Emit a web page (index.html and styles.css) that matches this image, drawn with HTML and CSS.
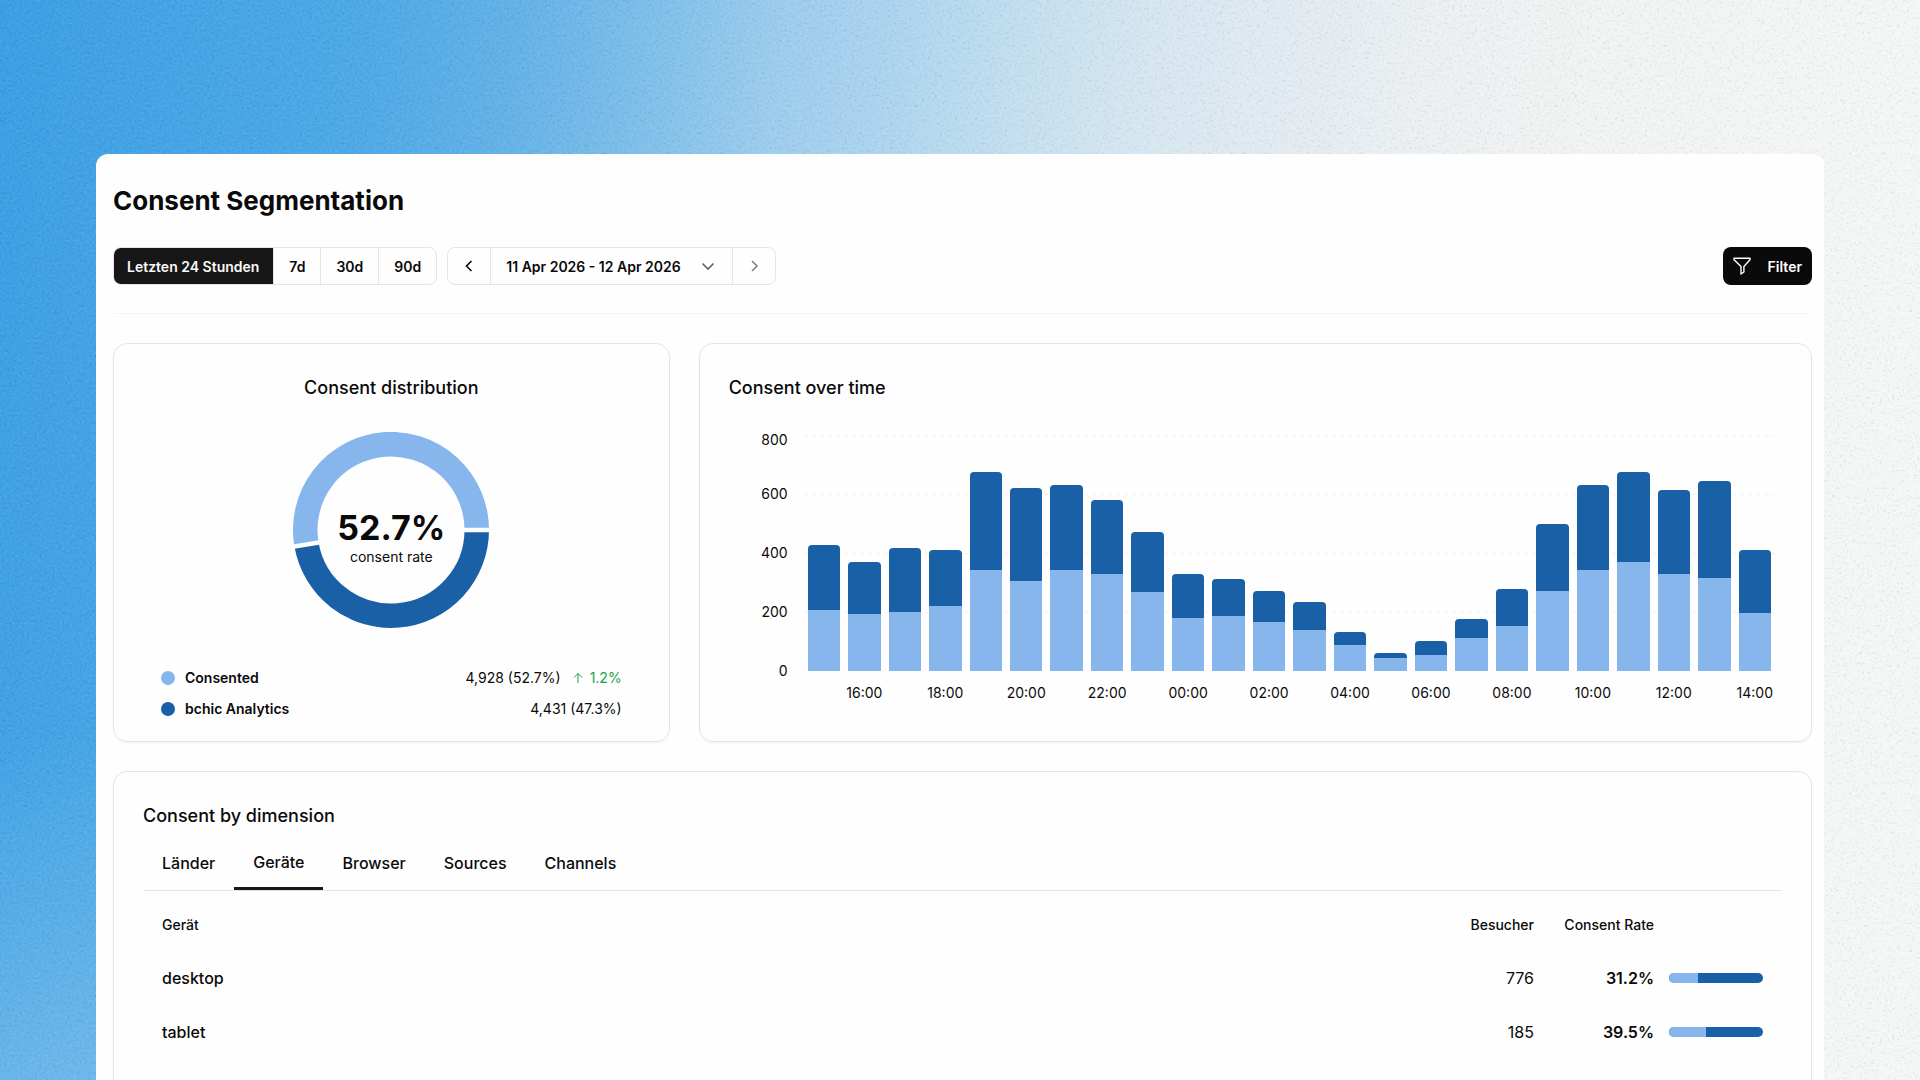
FILE: index.html
```html
<!DOCTYPE html>
<html lang="de">
<head>
<meta charset="utf-8">
<title>Consent Segmentation</title>
<link rel="stylesheet" href="styles.css">
</head>
<body>
<div class="stage">
  <svg class="grain" aria-hidden="true">
    <filter id="grain" x="0" y="0" width="100%" height="100%" color-interpolation-filters="sRGB">
      <feTurbulence type="fractalNoise" baseFrequency="0.4" numOctaves="3" seed="4"/>
      <feColorMatrix values="0.8 0.8 0.8 0 -0.7  0.8 0.8 0.8 0 -0.7  0.8 0.8 0.8 0 -0.7  0 0 0 0 1"/>
    </filter>
    <rect width="100%" height="100%" filter="url(#grain)"/>
  </svg>
  <main class="panel">
    <h1 class="page-title">Consent Segmentation</h1>
    <div class="toolbar">
      <div class="segmented" role="group" aria-label="Zeitraum">
        <button class="segment segment-active" type="button" aria-pressed="true">Letzten 24 Stunden</button>
        <button class="segment" type="button">7d</button>
        <button class="segment" type="button">30d</button>
        <button class="segment" type="button">90d</button>
      </div>
      <div class="segmented" role="group" aria-label="Datum">
        <button class="segment segment-icon" type="button" aria-label="Zurück"><svg class="chevron" viewBox="0 0 18 18"><path d="M11.500 4 L6.500 9 L11.500 14"/></svg></button>
        <button class="segment segment-date" type="button">11 Apr 2026 - 12 Apr 2026 <svg class="chevron chevron-muted" viewBox="0 0 18 18"><path d="M3.500 6.500 L9 12 L14.500 6.500"/></svg></button>
        <button class="segment segment-icon segment-disabled" type="button" disabled aria-label="Weiter"><svg class="chevron" viewBox="0 0 18 18"><path d="M7 4 L12 9 L7 14"/></svg></button>
      </div>
      <button class="filter-button" type="button"><svg class="funnel" viewBox="0 0 18 18"><path d="M1 1.300 H17 V2.800 L10.900 9.500 V15 L8 17 V9.500 L1 2.800 Z"/></svg>Filter</button>
    </div>

    <div class="cards">
      <section class="card distribution">
        <h2 class="card-title">Consent distribution</h2>
        <div class="donut">
          <svg class="donut-ring" viewBox="-98 -98 196 196" aria-hidden="true">
            <path class="ring-analytics" d="M85.750 0 A85.750 85.750 0 0 1 -84.500 14.500"/>
            <path class="ring-consented" d="M85.750 0 A85.750 85.750 0 1 0 -84.500 14.500"/>
            <path class="ring-gap" d="M72 0 H100 M-70.900 12.200 L-98.500 16.900"/>
          </svg>
          <p class="donut-label"><strong class="donut-value">52.7%</strong>consent rate</p>
        </div>
        <dl class="legend">
          <dt class="legend-name"><span class="dot dot-consented"></span>Consented</dt>
          <dd class="legend-value">4,928 (52.7%)<span class="trend"><svg class="trend-arrow" viewBox="0 0 12 12"><path d="M6 11 V1.500 M2 5.500 L6 1.500 L10 5.500"/></svg>1.2%</span></dd>
          <dt class="legend-name"><span class="dot dot-analytics"></span>bchic Analytics</dt>
          <dd class="legend-value">4,431 (47.3%)</dd>
        </dl>
      </section>

      <section class="card">
        <h2 class="card-title">Consent over time</h2>
        <div class="chart">
          <div class="y-axis"><span>800</span><span>600</span><span>400</span><span>200</span><span>0</span></div>
          <div class="plot">
            <svg class="gridlines" aria-hidden="true"><line x1="0" x2="100%" y1="0.500" y2="0.500"/><line x1="0" x2="100%" y1="59.500" y2="59.500"/><line x1="0" x2="100%" y1="118.500" y2="118.500"/><line x1="0" x2="100%" y1="177.500" y2="177.500"/></svg>
            <div class="bars">
              <div class="bar" style="--total:426;--consent:207"></div>
              <div class="bar" style="--total:369;--consent:194"></div>
              <div class="bar" style="--total:416;--consent:199"></div>
              <div class="bar" style="--total:411;--consent:220"></div>
              <div class="bar" style="--total:673;--consent:341"></div>
              <div class="bar" style="--total:621;--consent:306"></div>
              <div class="bar" style="--total:632;--consent:344"></div>
              <div class="bar" style="--total:579;--consent:327"></div>
              <div class="bar" style="--total:470;--consent:267"></div>
              <div class="bar" style="--total:328;--consent:180"></div>
              <div class="bar" style="--total:311;--consent:186"></div>
              <div class="bar" style="--total:270;--consent:165"></div>
              <div class="bar" style="--total:235;--consent:141"></div>
              <div class="bar" style="--total:132;--consent:87"></div>
              <div class="bar" style="--total:62;--consent:46"></div>
              <div class="bar" style="--total:101;--consent:54"></div>
              <div class="bar" style="--total:175;--consent:112"></div>
              <div class="bar" style="--total:279;--consent:153"></div>
              <div class="bar" style="--total:497;--consent:271"></div>
              <div class="bar" style="--total:632;--consent:344"></div>
              <div class="bar" style="--total:673;--consent:367"></div>
              <div class="bar" style="--total:615;--consent:331"></div>
              <div class="bar" style="--total:643;--consent:315"></div>
              <div class="bar" style="--total:410;--consent:197"></div>
            </div>
          </div>
          <div class="x-axis"><span></span><span>16:00</span><span></span><span>18:00</span><span></span><span>20:00</span><span></span><span>22:00</span><span></span><span>00:00</span><span></span><span>02:00</span><span></span><span>04:00</span><span></span><span>06:00</span><span></span><span>08:00</span><span></span><span>10:00</span><span></span><span>12:00</span><span></span><span>14:00</span></div>
        </div>
      </section>

      <section class="card card-wide">
        <h2 class="card-title">Consent by dimension</h2>
        <div class="tabs" role="tablist">
          <button class="tab" type="button" role="tab">Länder</button>
          <button class="tab tab-active" type="button" role="tab" aria-selected="true">Geräte</button>
          <button class="tab" type="button" role="tab">Browser</button>
          <button class="tab" type="button" role="tab">Sources</button>
          <button class="tab" type="button" role="tab">Channels</button>
        </div>
        <table class="dimension-table">
          <thead>
            <tr><th class="col-name">Gerät</th><th class="col-count">Besucher</th><th class="col-rate">Consent Rate</th><td class="col-share"></td></tr>
          </thead>
          <tbody>
            <tr><td class="col-name">desktop</td><td class="col-count">776</td><td class="col-rate">31.2%</td><td class="col-share"><div class="share"><div class="share-fill" style="width:31.2%"></div></div></td></tr>
            <tr><td class="col-name">tablet</td><td class="col-count">185</td><td class="col-rate">39.5%</td><td class="col-share"><div class="share"><div class="share-fill" style="width:39.5%"></div></div></td></tr>
            <tr><td class="col-name">mobile</td><td class="col-count"></td><td class="col-rate"></td><td class="col-share"></td></tr>
          </tbody>
        </table>
      </section>
    </div>
  </main>
</div>
</body>
</html>
```
FILE: styles.css
```css
:root {
  --light: #86b6ec;
  --dark: #1a60a6;
  --ink: #0a0a0a;
  --line: #e5e5e5;
}

* { box-sizing: border-box; }

body {
  margin: 0;
  font-family: Inter, "Liberation Sans", sans-serif;
  font-size: 14px;
  color: var(--ink);
}

h1, h2, p, dl, dd { margin: 0; }

button {
  font: inherit;
  color: inherit;
  background: none;
  border: 0;
  padding: 0;
}

.stage {
  position: relative;
  height: 100vh;
  overflow: hidden;
  padding: 154px 5% 0;
  background:
    radial-gradient(ellipse 30% 45% at 6% 112%, rgba(160, 208, 242, 0.6), rgba(160, 208, 242, 0)),
    linear-gradient(98deg, #3b9fe4 0%, #43a4e6 8%, #4ea9e7 18%, #63b2e8 25%, #80c0ea 32%, #9dcdee 38%, #afd6ef 44%, #c5e0f0 50%, #d7e7f1 56%, #e2ebf2 62%, #ecf0f2 69%, #f2f3f3 77%, #f5f6f6 93%);
}

.grain {
  position: absolute;
  inset: 0;
  width: 100%;
  height: 100%;
  mix-blend-mode: hard-light;
  opacity: 0.07;
}

.panel {
  position: relative;
  background: #fefefe;
  border-radius: 12px 12px 0 0;
  padding: 29px 12px 48px 17px;
}

.page-title {
  font-size: 26px;
  line-height: 36px;
  font-weight: 700;
}

.toolbar {
  display: flex;
  gap: 10px;
  padding: 28px 0;
  border-bottom: 1px solid #f5f5f5;
}

.segmented {
  display: flex;
  height: 38px;
  border: 1px solid var(--line);
  border-radius: 8px;
  overflow: hidden;
}

.segment {
  padding: 0 15px;
  font-weight: 600;
}

.segment + .segment { border-left: 1px solid var(--line); }

.segment-active {
  margin: -1px 0 -1px -1px;
  padding: 0 14px;
  background: #171717;
  color: #fafafa;
}

.segmented .segment-icon { padding: 0 12px; }

.segment-disabled { color: #808080; }

.segment-date {
  display: flex;
  align-items: center;
  gap: 18px;
}

.chevron {
  display: block;
  width: 18px;
  height: 18px;
  fill: none;
  stroke: currentColor;
  stroke-width: 1.6;
}

.chevron-muted { color: #606060; }

.filter-button {
  display: flex;
  align-items: center;
  gap: 17px;
  height: 38px;
  margin-left: auto;
  padding: 0 10px;
  border-radius: 8px;
  background: var(--ink);
  color: #fff;
  font-weight: 600;
}

.funnel {
  width: 18px;
  height: 18px;
  fill: none;
  stroke: currentColor;
  stroke-width: 1.4;
  stroke-linejoin: round;
}

.cards {
  display: grid;
  grid-template-columns: 1fr 2fr;
  gap: 29px;
  padding-top: 29px;
}

.card {
  min-width: 0;
  border: 1px solid var(--line);
  border-radius: 14px;
  padding: 30px 29px 17px;
  box-shadow: 0 1px 2px rgba(0, 0, 0, 0.05);
}

.card-wide { grid-column: 1 / -1; }

.card-title {
  font-size: 18px;
  line-height: 28px;
  font-weight: 500;
}

.distribution { text-align: center; }

.donut {
  display: grid;
  place-items: center;
  margin-top: 30px;
}

.donut-ring, .donut-label { grid-area: 1 / 1; }

.donut-ring {
  width: 196px;
  height: 196px;
  fill: none;
  stroke-width: 24.5;
}

.ring-consented { stroke: var(--light); }
.ring-analytics { stroke: var(--dark); }
.ring-gap { stroke: #fefefe; stroke-width: 4.5; }

.donut-label { line-height: 18px; padding-top: 14px; }

.donut-value {
  display: block;
  font-size: 34px;
  line-height: 40px;
}

.legend {
  display: grid;
  grid-template-columns: auto auto;
  justify-content: space-between;
  margin: 34px 18px 0;
  line-height: 31px;
}

.legend-name {
  display: flex;
  align-items: center;
  gap: 10px;
  font-weight: 600;
}

.dot {
  width: 14px;
  height: 14px;
  border-radius: 50%;
}

.dot-consented { background: var(--light); }
.dot-analytics { background: var(--dark); }

.legend-value { text-align: right; }

.trend { margin-left: 11px; color: #16a34a; }

.trend-arrow {
  width: 12px;
  height: 12px;
  margin-right: 6px;
  vertical-align: -1px;
  fill: none;
  stroke: currentColor;
}

.chart {
  display: grid;
  grid-template-columns: 59px 1fr;
  column-gap: 16px;
  margin: 31px 7px 0 0;
}

.y-axis {
  grid-row: 1 / 3;
  display: flex;
  flex-direction: column;
  text-align: right;
  line-height: 59px;
}

.y-axis span:first-child { height: 31px; line-height: 14px; }

.plot { display: grid; height: 238px; padding-top: 2px; }

.gridlines, .bars {
  grid-area: 1 / 1;
  width: 100%;
  height: 100%;
}

.gridlines { stroke: #f1f1f1; stroke-dasharray: 4 4; }

.bars {
  display: grid;
  grid-template-columns: repeat(24, 1fr);
  align-items: end;
}

.bar {
  height: calc(var(--total) / 8 * 1%);
  margin: 0 4px;
  border-radius: 4px 4px 0 0;
  background: linear-gradient(to top, var(--light) calc(var(--consent) / var(--total) * 100%), var(--dark) 0);
}

.x-axis {
  grid-column: 2;
  display: grid;
  grid-template-columns: repeat(24, 1fr);
  padding-top: 12px;
  text-align: center;
  line-height: 20px;
}

.tabs {
  display: flex;
  margin-top: 13px;
  border-bottom: 1px solid var(--line);
}

.tab {
  height: 47px;
  padding: 0 19px 7px;
  font-size: 16px;
  font-weight: 500;
}

.tab-active { border-bottom: 3px solid #171717; }

.dimension-table {
  width: 100%;
  border-collapse: collapse;
  font-size: 16px;
}

.dimension-table tr { height: 54px; }
.dimension-table thead tr { height: 60px; }
.dimension-table :is(th, td) { padding: 0; }
.dimension-table th { padding-top: 6px; font-size: 14px; font-weight: 500; }
.dimension-table .col-name { text-align: left; font-weight: 500; padding-left: 19px; }
.dimension-table .col-count { text-align: right; }
.dimension-table .col-rate { width: 120px; text-align: right; }
.dimension-table td.col-rate { font-weight: 600; }
.dimension-table .col-share { width: 128px; padding: 0 19px 0 15px; }

.share {
  height: 10px;
  border-radius: 5px;
  overflow: hidden;
  background: var(--dark);
}

.share-fill { height: 100%; background: var(--light); }
```
